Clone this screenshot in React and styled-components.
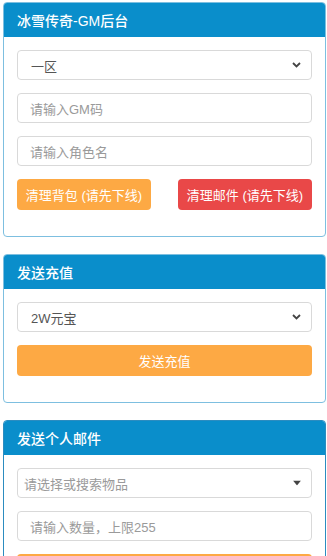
import React from 'react';
import styled, { createGlobalStyle } from 'styled-components';

const Global = createGlobalStyle`
  body {
    margin: 0;
    background: #fff;
    font-family: "Liberation Sans", "Noto Sans CJK SC", sans-serif;
  }
`;

const Page = styled.div`
  padding: 2px 1px 0 3px;
  display: flex;
  flex-direction: column;
  gap: 17px;
`;

const Panel = styled.div`
  border: 1px solid ${p => p.border || '#7dbfe0'};
  border-radius: 4px;
  overflow: hidden;
  background: #fff;
`;

const Head = styled.div`
  height: 34px;
  background: #0a8ecb;
  color: #fff;
  font-size: 14px;
  font-weight: 500;
  display: flex;
  align-items: center;
  padding-left: 13px;
`;

const Body = styled.div`
  padding: 13px 13px 26px;
  display: flex;
  flex-direction: column;
  gap: 13px;
`;

const Field = styled.div`
  position: relative;
  height: 30px;
  border: 1px solid #d9d9d9;
  border-radius: 4px;
  box-sizing: border-box;
  display: flex;
  align-items: center;
  padding-left: ${p => (p.pad ? p.pad : 13)}px;
  font-size: 13px;
  color: ${p => (p.muted ? '#9a9a9a' : '#555')};
`;

const Arrow = styled.span`
  position: absolute;
  right: 10px;
  top: 50%;
  transform: translateY(-50%);
  display: flex;
`;

const Row = styled.div`
  display: flex;
  justify-content: space-between;
`;

const Btn = styled.div`
  width: ${p => p.w || '100%'};
  height: 31px;
  border-radius: 4px;
  background: ${p => p.bg};
  color: #fff;
  font-size: 13px;
  display: flex;
  align-items: center;
  justify-content: center;
`;

const Chevron = () => (
  <svg width="9" height="6" viewBox="0 0 9 6">
    <path d="M1 1l3.5 3.5L8 1" fill="none" stroke="#444" strokeWidth="1.8" />
  </svg>
);

const Caret = () => (
  <svg width="8" height="5" viewBox="0 0 8 5">
    <path d="M0 0h8L4 5z" fill="#444" />
  </svg>
);

const Select = ({ children }) => (
  <Field>
    {children}
    <Arrow><Chevron /></Arrow>
  </Field>
);

export default function App() {
  return (
    <>
      <Global />
      <Page>
        <Panel>
          <Head>冰雪传奇-GM后台</Head>
          <Body>
            <Select>一区</Select>
            <Field muted pad={12}>请输入GM码</Field>
            <Field muted pad={12}>请输入角色名</Field>
            <Row>
              <Btn w="134px" bg="#fda944">清理背包 (请先下线)</Btn>
              <Btn w="134px" bg="#e94848">清理邮件 (请先下线)</Btn>
            </Row>
          </Body>
        </Panel>
        <Panel>
          <Head>发送充值</Head>
          <Body>
            <Select>2W元宝</Select>
            <Btn bg="#fda944">发送充值</Btn>
          </Body>
        </Panel>
        <Panel border="#2c8cc0">
          <Head>发送个人邮件</Head>
          <Body>
            <Field muted pad={6}>
              请选择或搜索物品
              <Arrow><Caret /></Arrow>
            </Field>
            <Field muted pad={12}>请输入数量，上限255</Field>
            <Btn bg="#fda944">发送邮件</Btn>
          </Body>
        </Panel>
      </Page>
    </>
  );
}
